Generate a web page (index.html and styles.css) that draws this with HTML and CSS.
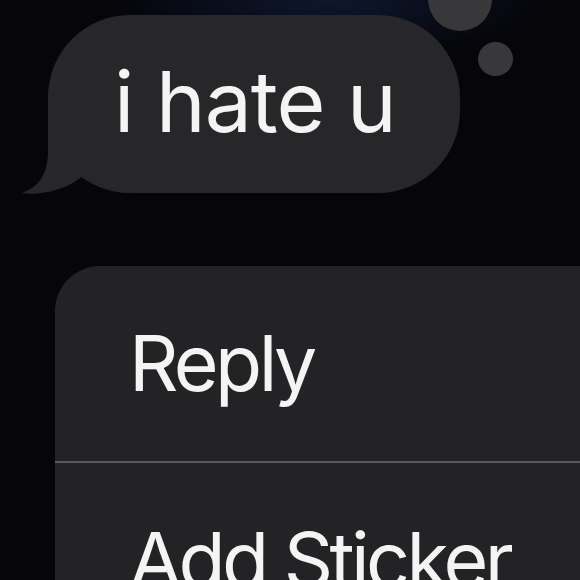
FILE: index.html
```html
<!DOCTYPE html>
<html>
<head>
<meta charset="utf-8">
<link rel="stylesheet" href="styles.css">
</head>
<body>
<div class="screen">
  <div class="message">
    <div class="bubble">
      <span class="bubble-text">i hate u</span>
    </div>
    <svg class="tail" width="140" height="200" viewBox="0 0 140 200">
      <path d="M48 95 L48 150 C48 172 41 186 22 193 C46 196 70 188 85 174 C100 187 118 193 140 193 L140 95 Z" fill="#27272a"/>
    </svg>
    <span class="thought thought-big"></span>
    <span class="thought thought-small"></span>
  </div>
  <div class="menu">
    <div class="menu-item">Reply</div>
    <div class="menu-sep"></div>
    <div class="menu-item">Add Sticker</div>
  </div>
</div>
</body>
</html>
```
FILE: styles.css
```css
html, body {
  margin: 0;
  padding: 0;
  background: #05050a;
}
.screen {
  position: relative;
  width: 580px;
  height: 580px;
  overflow: hidden;
  background:
    radial-gradient(ellipse 220px 60px at 330px 0px, rgba(16, 26, 52, 0.85), rgba(8, 10, 22, 0) 100%),
    #05050a;
  font-family: Inter, "Noto Sans", sans-serif;
  color: #f4f4f5;
}
.message {
  position: relative;
  padding-top: 15px;
  padding-left: 48px;
}
.bubble {
  width: 412px;
  height: 178px;
  box-sizing: border-box;
  border-radius: 82px;
  background: #27272a;
  display: flex;
  align-items: center;
  padding-left: 66px;
}
.bubble-text {
  font-size: 84px;
  line-height: 1;
  letter-spacing: -1px;
  position: relative;
  top: -2px;
  z-index: 2;
}
.tail {
  position: absolute;
  left: 0;
  top: 0;
  z-index: 1;
}
.thought {
  position: absolute;
  border-radius: 50%;
  background: #38383b;
}
.thought-big {
  left: 428px;
  top: -33px;
  width: 64px;
  height: 64px;
}
.thought-small {
  left: 478px;
  top: 42px;
  width: 35px;
  height: 34px;
}
.menu {
  margin-top: 73px;
  margin-left: 55px;
  width: 600px;
  background: #232325;
  border-radius: 45px 45px 0 0;
  display: flex;
  flex-direction: column;
}
.menu-item {
  height: 195px;
  box-sizing: border-box;
  display: flex;
  align-items: center;
  padding-left: 74px;
  font-size: 77px;
  line-height: 1;
  letter-spacing: -3.6px;
  white-space: nowrap;
}
.menu-sep {
  height: 2px;
  background: #58585b;
}
```
